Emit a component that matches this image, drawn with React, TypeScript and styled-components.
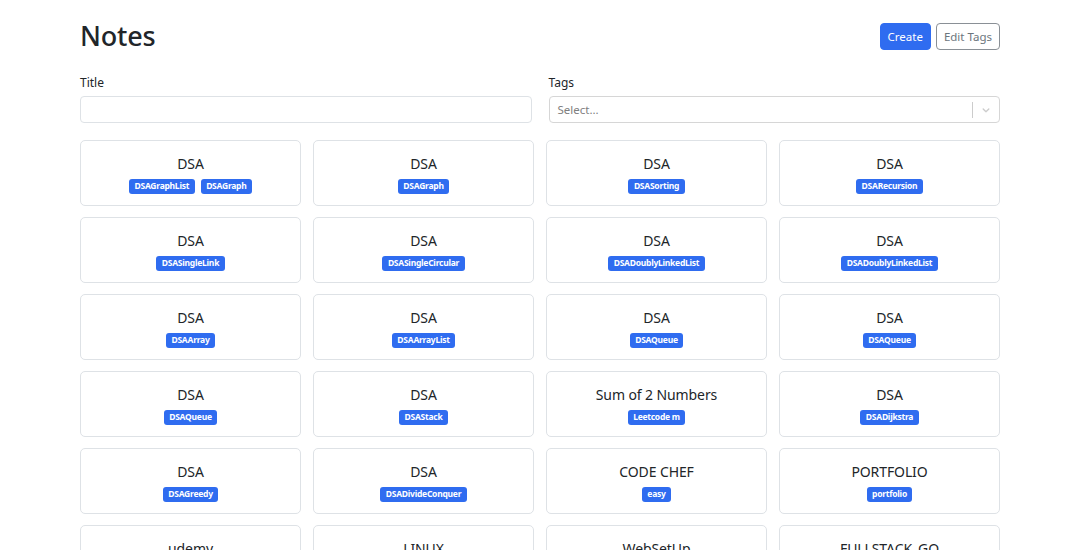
import styled, { createGlobalStyle } from 'styled-components';

const GlobalStyle = createGlobalStyle`
  body {
    margin: 0;
    background: #fff;
    color: #212529;
    font-family: "Noto Sans", "Open Sans", sans-serif;
  }
  * { box-sizing: border-box; }
`;

const Page = styled.div`
  width: 920px;
  margin: 0 auto;
  padding-top: 15px;
`;

const Header = styled.div`
  display: flex;
  align-items: center;
  justify-content: space-between;
  height: 42px;
`;

const Heading = styled.h1`
  margin: 0;
  font-size: 27px;
  font-weight: 500;
  line-height: 1.2;
  letter-spacing: -0.2px;
`;

const Actions = styled.div`
  display: flex;
  gap: 5px;
`;

const Button = styled.button<{ $primary?: boolean }>`
  height: 27px;
  padding: 0 7px;
  font-family: inherit;
  font-size: 11.5px;
  border-radius: 4px;
  cursor: pointer;
  background: ${p => (p.$primary ? '#2f6cf0' : '#fff')};
  color: ${p => (p.$primary ? '#fff' : '#6c757d')};
  border: 1px solid ${p => (p.$primary ? '#2f6cf0' : '#8a9096')};
`;

const Filters = styled.div`
  display: grid;
  grid-template-columns: 1fr 1fr;
  gap: 17px;
  margin-top: 18px;
`;

const Field = styled.div`
  display: flex;
  flex-direction: column;
`;

const Label = styled.label`
  font-size: 12px;
  line-height: 16px;
  margin-bottom: 5px;
`;

const Input = styled.input`
  height: 27px;
  border: 1px solid #dee2e6;
  border-radius: 4px;
  padding: 0 10px;
  font-family: inherit;
  font-size: 12px;
`;

const SelectBox = styled.div`
  height: 27px;
  border: 1px solid #d6d6d6;
  border-radius: 4px;
  display: flex;
  align-items: center;
  padding-left: 8px;
`;

const Placeholder = styled.span`
  flex: 1;
  font-size: 11.5px;
  color: #808080;
`;

const Separator = styled.span`
  width: 1px;
  height: 16px;
  background: #cccccc;
`;

const Chevron = styled.span`
  width: 26px;
  display: flex;
  justify-content: center;
  color: #cccccc;
`;

const Grid = styled.div`
  display: grid;
  grid-template-columns: repeat(4, 1fr);
  column-gap: 12px;
  row-gap: 11px;
  margin-top: 17px;
`;

const Card = styled.div`
  height: 66px;
  border: 1px solid #dee2e6;
  border-radius: 5px;
  display: flex;
  flex-direction: column;
  align-items: center;
  gap: 5px;
  padding-top: 13px;
`;

const CardTitle = styled.div`
  font-size: 14px;
  line-height: 20px;
  letter-spacing: -0.1px;
`;

const Tags = styled.div`
  display: flex;
  gap: 6px;
`;

const Badge = styled.span`
  background: #2f6cf0;
  color: #fff;
  font-size: 8.5px;
  font-weight: 700;
  line-height: 14.5px;
  padding: 0 5.5px;
  border-radius: 3px;
  letter-spacing: -0.25px;
`;

const notes: { title: string; tags: string[] }[] = [
  { title: 'DSA', tags: ['DSAGraphList', 'DSAGraph'] },
  { title: 'DSA', tags: ['DSAGraph'] },
  { title: 'DSA', tags: ['DSASorting'] },
  { title: 'DSA', tags: ['DSARecursion'] },
  { title: 'DSA', tags: ['DSASingleLink'] },
  { title: 'DSA', tags: ['DSASingleCircular'] },
  { title: 'DSA', tags: ['DSADoublyLinkedList'] },
  { title: 'DSA', tags: ['DSADoublyLinkedList'] },
  { title: 'DSA', tags: ['DSAArray'] },
  { title: 'DSA', tags: ['DSAArrayList'] },
  { title: 'DSA', tags: ['DSAQueue'] },
  { title: 'DSA', tags: ['DSAQueue'] },
  { title: 'DSA', tags: ['DSAQueue'] },
  { title: 'DSA', tags: ['DSAStack'] },
  { title: 'Sum of 2 Numbers', tags: ['Leetcode m'] },
  { title: 'DSA', tags: ['DSADijkstra'] },
  { title: 'DSA', tags: ['DSAGreedy'] },
  { title: 'DSA', tags: ['DSADivideConquer'] },
  { title: 'CODE CHEF', tags: ['easy'] },
  { title: 'PORTFOLIO', tags: ['portfolio'] },
  { title: 'udemy', tags: ['udemy'] },
  { title: 'LINUX', tags: ['linux'] },
  { title: 'WebSetUp', tags: ['setup'] },
  { title: 'FULLSTACK_GO', tags: ['go'] },
];

export default function App() {
  return (
    <Page>
      <GlobalStyle />
      <Header>
        <Heading>Notes</Heading>
        <Actions>
          <Button $primary>Create</Button>
          <Button>Edit Tags</Button>
        </Actions>
      </Header>
      <Filters>
        <Field>
          <Label>Title</Label>
          <Input type="text" />
        </Field>
        <Field>
          <Label>Tags</Label>
          <SelectBox>
            <Placeholder>Select...</Placeholder>
            <Separator />
            <Chevron>
              <svg width="12" height="12" viewBox="0 0 20 20" fill="currentColor">
                <path d="M4.516 7.548c0.436-0.446 1.043-0.481 1.576 0l3.908 3.747 3.908-3.747c0.533-0.481 1.141-0.446 1.574 0 0.436 0.445 0.408 1.197 0 1.615-0.406 0.418-4.695 4.502-4.695 4.502-0.217 0.223-0.502 0.335-0.787 0.335s-0.570-0.112-0.789-0.335c0 0-4.287-4.084-4.695-4.502s-0.436-1.17 0-1.615z" />
              </svg>
            </Chevron>
          </SelectBox>
        </Field>
      </Filters>
      <Grid>
        {notes.map((n, i) => (
          <Card key={i}>
            <CardTitle>{n.title}</CardTitle>
            <Tags>
              {n.tags.map(t => (
                <Badge key={t}>{t}</Badge>
              ))}
            </Tags>
          </Card>
        ))}
      </Grid>
    </Page>
  );
}
